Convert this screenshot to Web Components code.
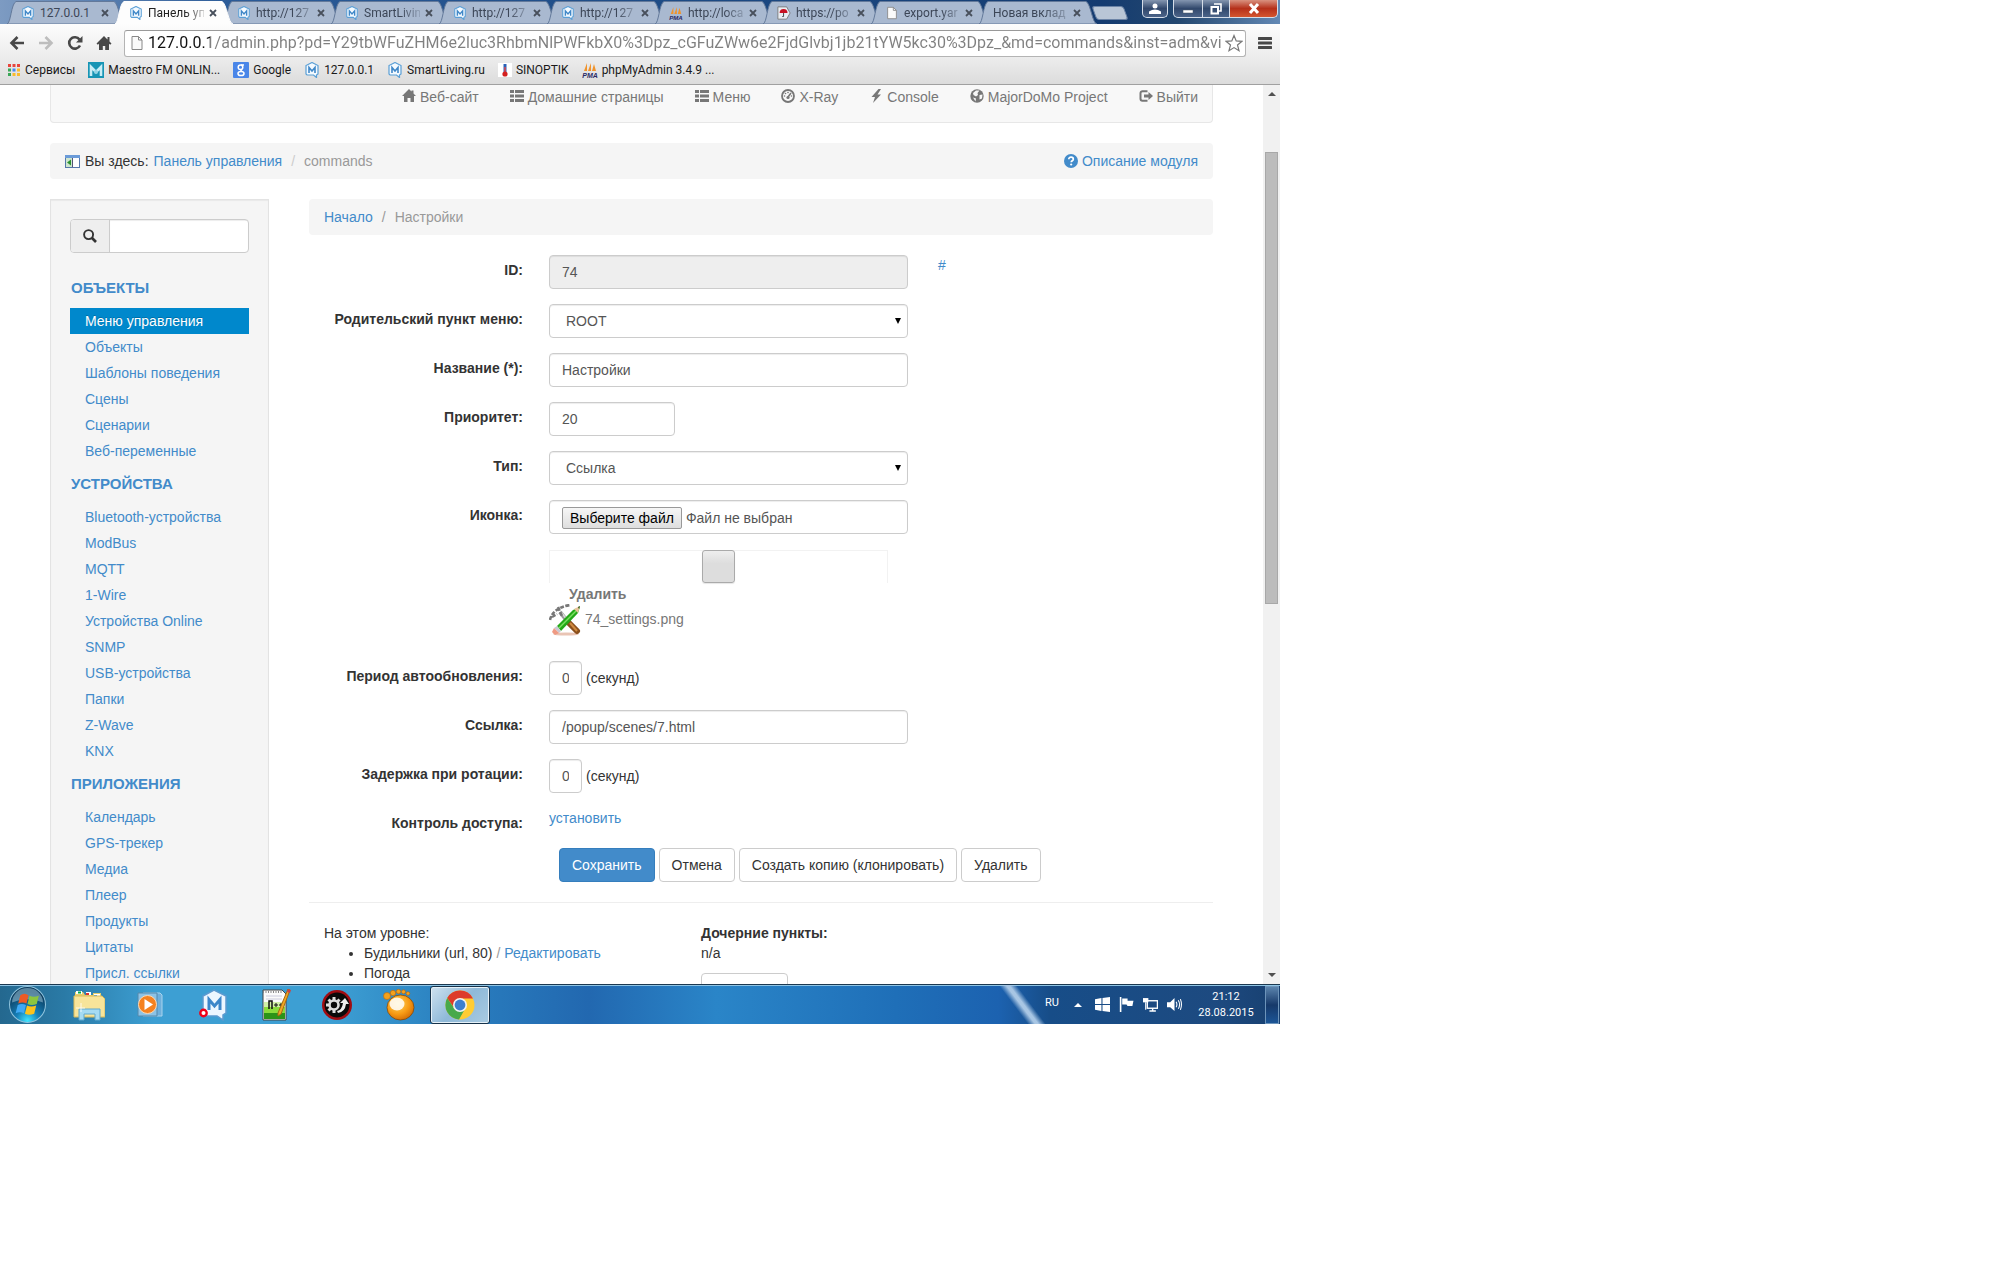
<!DOCTYPE html>
<html lang="ru">
<head>
<meta charset="utf-8">
<title>Панель управления</title>
<style>
body{margin:0;background:#fff;font:14px/20px "Liberation Sans",Arial,sans-serif;color:#333}
</style>
</head>
<body>
<desk-top></desk-top>
<script>
const M = '<path d="M8 .5l6 3v8.500l-1.500 1v2.500l-3-2.500H3L2 12V3.500z" fill="#f4faff" stroke="#5a9fd6" stroke-width="1.200"/><path d="M5 11V5.500l3 3.500 3-3.500V11" fill="none" stroke="#4088c8" stroke-width="1.600"/>';
const PMA = '<path d="M2 9L5 1v8zM6 9l3-8v8zM10 9l2-7 2 7z" fill="#f0932b"/><text x="8" y="16" font-size="7" font-weight="bold" font-style="italic" text-anchor="middle" font-family="Liberation Sans" fill="#2a2a66">PMA</text>';
const ICONS = {
  m: [16, M],
  pma: [16, PMA],
  umbrella: [16, '<path d="M1 1h10l4 7-4 7H1z" fill="#e9edf2" stroke="#777"/><path d="M3 8a4.500 4.500 0 0 1 9 0z" fill="#c81020"/><path d="M7.500 8v4h-1.500" fill="none" stroke="#333"/>'],
  file: [16, '<path d="M3 1.500h6.500l3.500 3.500v9.500H3z" fill="#fafafa" stroke="#888"/><path d="M9.500 1.500V5H13" fill="none" stroke="#888"/>'],
  close: [8, '<path d="M1 1l6 6M7 1L1 7" stroke="#48505c" stroke-width="1.800"/>'],
  back: [16, '<path d="M15 8H3M8.500 2L2.500 8l6 6" fill="none" stroke="#484848" stroke-width="2.600"/>'],
  fwd: [16, '<path d="M1 8h12M7.500 2l6 6-6 6" fill="none" stroke="#bdbdbd" stroke-width="2.600"/>'],
  reload: [16, '<path d="M13 10.500A5.700 5.700 0 1 1 12.500 4.500" fill="none" stroke="#484848" stroke-width="2.600"/><path d="M15.500 1v6.500H9z" fill="#484848"/>'],
  house: [16, '<path d="M8 1L.5 8.500l1.300 1.300L3 8.800V15h3.800v-4h2.400v4H13V8.800l1.200 1 1.300-1.300-2-2V2h-2v2.500z" fill="#484848"/>'],
  star: [18, '<path d="M9 1.500l2.200 5.400 5.800.4-4.500 3.700 1.500 5.700L9 13.600 4 16.700l1.500-5.700L1 7.300l5.800-.4z" fill="#fff" stroke="#777" stroke-width="1.200"/>'],
  burger: [14, '<path d="M1 2.500h12M1 7h12M1 11.500h12" stroke="#484848" stroke-width="3" stroke-linecap="round"/>'],
  apps: [14, '<g><path d="M1 1h3v3H1zM5.500 1h3v3h-3z" fill="#e8453c"/><path d="M10 1h3v3h-3z" fill="#e8453c"/><path d="M1 5.500h3v3H1z" fill="#3aa757"/><path d="M5.500 5.500h3v3h-3z" fill="#4688f1"/><path d="M10 5.500h3v3h-3zM10 10h3v3h-3zM5.500 10h3v3h-3z" fill="#f9bb2d"/><path d="M1 10h3v3H1z" fill="#3aa757"/></g>'],
  maestro: [16, '<rect width="16" height="16" fill="#1795b5"/><path d="M3 14V5l5 5 5-5v9" fill="none" stroke="#c9edf5" stroke-width="2.600"/><circle cx="8" cy="10" r="2" fill="#8fd3e4"/>'],
  google: [16, '<rect width="16" height="16" rx="1" fill="#4a86e8"/><circle cx="7.500" cy="5.200" r="2.300" fill="none" stroke="#fff" stroke-width="1.500"/><path d="M8 3h3M9 7.500L7.500 9" stroke="#fff" stroke-width="1.400"/><ellipse cx="8" cy="11.500" rx="3" ry="2.100" fill="none" stroke="#fff" stroke-width="1.500"/>'],
  thermo: [14, '<rect width="14" height="14" fill="#fff"/><path d="M5.500 1h3v8h-3z" fill="#2a62b8"/><path d="M7 4v6" stroke="#e44" stroke-width="1.400"/><circle cx="7" cy="11" r="2.600" fill="#d42020"/>'],
  home: [14, '<path d="M7 0L0 7h2v6h3.500V9h3v4H12V7h2l-2.500-2.500V1.500h-2v1z" fill="#777"/>'],
  list: [14, '<path d="M0 1h4v3H0zM5 1h9v3H5zM0 5.500h4v3H0zM5 5.500h9v3H5zM0 10h4v3H0zM5 10h9v3H5z" fill="#777"/>'],
  gauge: [14, '<circle cx="7" cy="7" r="6" fill="none" stroke="#777" stroke-width="1.800"/><path d="M7 8l3-4" stroke="#777" stroke-width="1.500"/><g fill="#777"><circle cx="7" cy="8.500" r="1.600"/><circle cx="3.500" cy="7" r=".8"/><circle cx="4.500" cy="4.500" r=".8"/><circle cx="7" cy="3.500" r=".8"/><circle cx="10.500" cy="7" r=".8"/></g>'],
  flash: [14, '<path d="M9.500 0L2.500 8H6l-2 6 8-8.500H8.500L12 0z" fill="#777"/>'],
  globe: [14, '<circle cx="7" cy="7" r="6.700" fill="#777"/><path d="M6 1.500L3 4l.5 2L6 7.500 8 6l-.5-2 2-2.500zM9.500 6l3-.5-.5 4-2.500 1zM3 8.500l3 1-.5 3z" fill="#f8f8f8"/>'],
  logout: [14, '<path d="M8.500 2.200H3.500a2 2 0 0 0-2 2v5.600a2 2 0 0 0 2 2h5" fill="none" stroke="#777" stroke-width="2"/><path d="M5 5.500h4.500V3L14 7l-4.500 4V8.500H5z" fill="#777"/>'],
  panel: [15, '<rect x=".5" y="1.500" width="14" height="12" fill="#fff" stroke="#5577aa"/><path d="M0 1h15v3H0z" fill="#6b9bd8"/><path d="M1 4h6v9H1z" fill="#cfe6cf"/><path d="M6 5.500L2 8.500l4 3z" fill="#2b9130"/><path d="M7.500 4v9" stroke="#557"/>'],
  help: [14, '<circle cx="7" cy="7" r="7" fill="#428bca"/><path d="M4.800 5.200C4.800 2.500 9.300 2.600 9.300 5.200 9.300 6.800 7.200 6.800 7.200 8.300" fill="none" stroke="#fff" stroke-width="1.700"/><circle cx="7.200" cy="10.500" r="1.100" fill="#fff"/>'],
  search: [14, '<circle cx="5.600" cy="5.600" r="4.500" fill="none" stroke="#333" stroke-width="1.900"/><path d="M9 9l4 4" stroke="#333" stroke-width="2.600"/>'],
  down: [6, '<path d="M0 0h6L3 6z" fill="#000"/>'],
  sup: [8, '<path d="M0 6h8L4 2z" fill="#505050"/>'],
  sdn: [8, '<path d="M0 2h8L4 6z" fill="#505050"/>'],
  tools: [32, '<ellipse cx="17" cy="30" rx="13" ry="1.600" fill="#e9c4b4"/><path d="M19 18L28 27" stroke="#8a4f1c" stroke-width="6" stroke-linecap="round"/><path d="M21 19l7 8" stroke="#d08a40" stroke-width="2"/><path d="M11 8l8 10" stroke="#999" stroke-width="4"/><path d="M12 8l7 9" stroke="#ddd" stroke-width="1.500"/><path d="M1 16C2 10 8 3 21 1M3 13l5-3M9 3l4 9" fill="none" stroke="#777" stroke-width="2.600" stroke-dasharray="4 1.500"/><path d="M31 3L24 6 8 22l4 5L29 9z" fill="#24a818"/><path d="M27 7L10 24" stroke="#7be060" stroke-width="1.500"/><path d="M31 2l-6 3 4 4z" fill="#e9c39b"/><path d="M31 2l-2 1 1 2z" fill="#205010"/><path d="M8 22l4 5-2 2-5-5z" fill="#c9c9d4"/><path d="M5 24l5 5-4 2-3-3z" fill="#ef9a83"/>'],
  orb: [36, '<defs><radialGradient id="g" cx=".5" cy=".95" r=".8"><stop offset="0" stop-color="#3fe6ff"/><stop offset=".4" stop-color="#1680b8"/><stop offset="1" stop-color="#0b3a5c"/></radialGradient></defs><circle cx="18" cy="18" r="17.500" fill="url(#g)" stroke="#8fc3dc"/><path d="M3 16a15 14 0 0 1 30 0q-15-6-30 0z" fill="#9cc4d8" opacity=".55"/><path d="M11 9q4-3 8 0l-2 8q-4-2-8 0z" fill="#ee5a24"/><path d="M20 9.500q4 2 9 0l-2 8q-5 2-9 0z" fill="#8cc63f"/><path d="M8.500 18.500q4-2 8 0l-2 8q-4-2-8 0z" fill="#3fa9f5"/><path d="M17.500 19q4 2 9 0l-2 8q-5 2-9 0z" fill="#fcc21b"/>'],
  folder: [32, '<path d="M2 3h8l2 3h8V4h8v6H2z" fill="#e8cf6e"/><path d="M3 2h6v3H3z" fill="#fff"/><path d="M5 2.500h3v2H5z" fill="#0a4"/><path d="M13 3h5v3h-5z" fill="#fff"/><path d="M13 4h3v2h-3z" fill="#d33"/><path d="M21 5h6v3h-6z" fill="#fff"/><path d="M21 6h3v2h-3z" fill="#39f"/><path d="M1 7h28l3 3v18H1z" fill="#f7e49a" stroke="#d9ba58"/><path d="M6 31V20h21v11h-5v-6H11v6z" fill="#a5dbf3" stroke="#5fa9cf"/><path d="M8 14v9M3 19h9" stroke="#fff" opacity=".8"/>'],
  media: [32, '<path d="M8 4h17l2 2v21H8z" fill="#6fb0dc" stroke="#a9d4ee"/><path d="M3 4h19v23H3z" fill="#8cc3e6" stroke="#58a"/><circle cx="12.500" cy="15.500" r="9" fill="#f58220" stroke="#ffd9b0"/><path d="M9.500 10l8.500 5.500-8.500 5.500z" fill="#fff"/>'],
  mbig: [32, '<path d="M17 1l12 6v17l-3 2v5l-6-4H10L6 24V7z" fill="#edf6ff" stroke="#5c9ad0" stroke-width="1.500"/><path d="M12 21V10.500l5.500 6.500 5.500-6.500V21" fill="none" stroke="#3d86c9" stroke-width="3"/><circle cx="6.500" cy="24" r="3.200" fill="#fff" stroke="#f00018" stroke-width="2.400"/>'],
  note: [32, '<path d="M4 1h19l4 4v26H4z" fill="#fbfbfb" stroke="#444"/><path d="M5 13h21v17H5z" fill="#d2f0a8"/><path d="M5 18h21v6H5z" fill="#8bdc3c"/><path d="M5 24h21v6H5z" fill="#2c9318"/><path d="M4 3h19" stroke="#888" stroke-width="2" stroke-dasharray="1 1.500"/><path d="M7 7h16M7 10h16" stroke="#ccd"/><path d="M10 20v-8h3v8" fill="none" stroke="#111" stroke-width="1.500"/><path d="M15 16h4M17 14v4M20 16h4M22 14v4" stroke="#111"/><path d="M31 1l-2-1-10 24v3l3-2z" fill="#f0a824" stroke="#a86810"/><path d="M29 0l3 1-1 3-3-1z" fill="#c44"/>'],
  gear: [32, '<circle cx="16" cy="16" r="15" fill="#a00c12"/><circle cx="16" cy="16" r="12.500" fill="#0a0a0a"/><circle cx="13" cy="16" r="4.500" fill="none" stroke="#ddd" stroke-width="2.600"/><path d="M13 8v3M13 21v3M5 16h3M7.500 10.500l2 2M7.500 21.500l2-2M18.500 10.500l-2 2" stroke="#ddd" stroke-width="3"/><path d="M16 22q5-1 6-8h-3l5-5 4 6h-3q-1 8-8 9z" fill="#eee"/>'],
  gom: [32, '<defs><radialGradient id="o" cx=".4" cy=".35" r=".7"><stop offset="0" stop-color="#ffd75e"/><stop offset=".6" stop-color="#f79a14"/><stop offset="1" stop-color="#d06a04"/></radialGradient></defs><g fill="#f5a11b" stroke="#b8650a" stroke-width=".6"><circle cx="4" cy="7" r="3.500"/><circle cx="10" cy="4" r="2.700"/><circle cx="15.500" cy="2.500" r="2.200"/><circle cx="20.500" cy="2.800" r="2"/><circle cx="25" cy="4.500" r="1.800"/></g><ellipse cx="17.500" cy="18.500" rx="13.500" ry="12.500" fill="url(#o)" stroke="#804000" stroke-width=".7"/><ellipse cx="14" cy="15" rx="7.500" ry="6.500" fill="#fff" opacity=".85"/>'],
  chrome: [32, '<circle cx="16" cy="16" r="14.500" fill="#fc3"/><path d="M16 1.500A14.500 14.500 0 0 1 29 9.500H16L9.500 18 3.200 9A14.500 14.500 0 0 1 16 1.500z" fill="#dd3b2b"/><path d="M3.200 9A14.500 14.500 0 0 0 15 30.500L21.500 19H10z" fill="#48a94a"/><circle cx="16" cy="16" r="7" fill="#f3f3f3"/><circle cx="16" cy="16" r="5.400" fill="#3d7fd0"/>'],
  tup: [8, '<path d="M0 6h8L4 2z" fill="#fff"/>'],
  win: [14, '<path d="M0 2l6-1v5.500H0zM7 1l7-1v6.500H7zM0 7.500h6V13l-6-1zM7 7.500h7V14l-7-1z" fill="#fff"/>'],
  flag: [14, '<path d="M1.500 0v14" stroke="#fff" stroke-width="1.500"/><path d="M3 1.500h5v2h5.500l-1 5H8l-1-1.500H3z" fill="#fff"/>'],
  net: [14, '<rect x="4" y="3.500" width="9.500" height="7" fill="#1d4a80" stroke="#fff" stroke-width="1.300"/><path d="M6 13h6M9 10.500V13" stroke="#fff" stroke-width="1.300"/><path d="M0 1h5v4H0z" fill="#fff"/><path d="M2.500 5v7" stroke="#fff"/>'],
  sound: [14, '<path d="M0 5h3l4-4v12L3 9.500H0z" fill="#fff"/><path d="M8.500 4.500q1.500 2.500 0 5M10.500 3q2.500 4 0 8M12.500 2q2 5 0 10" fill="none" stroke="#fff"/>'],
  user: [12, '<circle cx="6" cy="3" r="2.500" fill="#fff"/><path d="M0 11V8.500Q6 4.500 12 8.500V11z" fill="#fff"/>'],
  min: [12, '<path d="M1 7h10v3H1z" fill="#fff" stroke="#456" stroke-width=".5"/>'],
  max: [12, '<path d="M4 1h7v7H9" fill="none" stroke="#fff" stroke-width="1.600"/><path d="M1.500 4h6.500v6.500H1.500z" fill="none" stroke="#fff" stroke-width="2"/>'],
  shut: [12, '<path d="M2 1l8 9M10 1l-8 9" stroke="#fff" stroke-width="3"/>']
};
const icon = (n, s) => `<svg class="i" aria-hidden="true" width="${s || ICONS[n][0]}" height="${s || ICONS[n][0]}" viewBox="0 0 ${ICONS[n][0]} ${ICONS[n][0]}">${ICONS[n][1]}</svg>`;
const BASE = `*{box-sizing:border-box}:host{display:block}.i{flex:none;display:block}a{color:#428bca;text-decoration:none}button{font:inherit;margin:0;cursor:pointer}`;
const define = (name, css, html) => customElements.define(name, class extends HTMLElement {
  connectedCallback() {
    if (this.shadowRoot) return;
    this.attachShadow({ mode: 'open' }).innerHTML = `<style>${BASE}${css}</style>${typeof html === 'function' ? html(this) : html}`;
  }
});
const at = (el, n, d = '') => el.getAttribute(n) ?? d;

/* window frame */
define('desk-top', `:host{display:flex;flex-direction:column;max-width:1280px;height:1024px;max-height:100vh;overflow:hidden}
page-view{flex:1;min-height:0}`,
`<title-bar></title-bar><address-bar></address-bar><bookmark-bar></bookmark-bar><page-view></page-view><task-bar></task-bar>`);

define('browser-tab', `:host{flex:0 1 118px;margin-right:-10px;min-width:0;position:relative;height:23px}
:host([active]){z-index:2}
.shape{position:absolute;inset:0;width:100%;height:100%}
button{position:relative;width:100%;height:100%;border:0;background:none;padding:0 16px 0 14px;display:flex;align-items:center;gap:5px;font:12px/20px Roboto,sans-serif;color:#3c4657;text-align:left}
:host([active]) button{color:#222}
span{flex:1;min-width:0;overflow:hidden;white-space:nowrap;-webkit-mask-image:linear-gradient(90deg,#000 65%,transparent 110%);mask-image:linear-gradient(90deg,#000 65%,transparent 110%)}
:host([full]) span{-webkit-mask-image:none;mask-image:none}`,
e => `<svg class="shape" viewBox="0 0 118 23" preserveAspectRatio="none"><path d="M0 23C4 22 4 3 9 .5H107C112 3 113 22 118 23z" fill="${e.hasAttribute('active') ? '#fdfdfd' : '#a9b9d0'}" stroke="${e.hasAttribute('active') ? '#fdfdfd' : '#63799a'}"/></svg>
<button type="button">${at(e, 'icon') ? icon(at(e, 'icon'), 14) : ''}<span>${at(e, 'label')}</span>${icon('close')}</button>`);

define('title-bar', `:host{display:flex;align-items:flex-start;height:24px;padding:1px 2px 0 7px;background:linear-gradient(90deg,#7d9bc2 0,#2b5b98 18%,#1c4a84 55%,#143b70 86%,#23476f 92%,#6288b4 100%)}
nav{display:flex;flex:0 1 1090px;min-width:0}
.new{width:32px;height:14px;margin:5px 0 0 -3px;border:1px solid #6c84a6;background:#b9c6d6;transform:skewX(20deg);border-radius:3px;padding:0}
.ctl{margin:-1px 0 0 auto;display:flex;gap:5px}
.ctl button{height:18px;border:1px solid #d5dde8;border-top:0;border-left-width:0;padding:0;display:grid;place-items:center;background:linear-gradient(#8496b0,#31486c 50%,#4a6388)}
.u button{width:26px;border-left-width:1px;border-radius:0 0 5px 5px}
.w{display:flex}.w button{width:27px}.w button:first-child{width:30px;border-left-width:1px;border-radius:0 0 0 5px}
.w button:last-child{width:48px;border-radius:0 0 5px 0;background:linear-gradient(#d9917f,#b5301a 50%,#d4552f)}`,
`<nav><browser-tab icon="m" label="127.0.0.1" full></browser-tab><browser-tab icon="m" label="Панель уп" active></browser-tab><browser-tab icon="m" label="http://127"></browser-tab><browser-tab icon="m" label="SmartLivin"></browser-tab><browser-tab icon="m" label="http://127"></browser-tab><browser-tab icon="m" label="http://127"></browser-tab><browser-tab icon="pma" label="http://loca"></browser-tab><browser-tab icon="umbrella" label="https://po"></browser-tab><browser-tab icon="file" label="export.yar"></browser-tab><browser-tab label="Новая вклад"></browser-tab></nav>
<button class="new" type="button"></button>
<div class="ctl"><div class="u"><button type="button">${icon('user')}</button></div><div class="w"><button type="button">${icon('min')}</button><button type="button">${icon('max')}</button><button type="button">${icon('shut')}</button></div></div>`);

define('address-bar', `:host{display:flex;align-items:center;gap:12px;height:36px;padding:2px 8px 0 9px;background:linear-gradient(#fdfdfd,#ebebeb)}
.nav{display:flex;gap:13px}
.nav button,.menu{border:0;background:none;padding:0}
.box{flex:1;min-width:0;display:flex;align-items:center;gap:3px;height:27px;border:1px solid #b4b4b4;border-top-color:#999;border-radius:3px;background:#fff;padding:0 2px 0 4px}
input{flex:1;min-width:0;border:0;outline:0;padding:0;height:24px;font:16px/24px Roboto,sans-serif;color:#808080;background:linear-gradient(90deg,#111 62px,#808080 62px);-webkit-background-clip:text;background-clip:text;-webkit-text-fill-color:transparent}`,
`<div class="nav"><button type="button">${icon('back')}</button><button type="button">${icon('fwd')}</button><button type="button">${icon('reload')}</button><button type="button">${icon('house')}</button></div>
<div class="box">${icon('file')}<input type="text" value="127.0.0.1/admin.php?pd=Y29tbWFuZHM6e2luc3RhbmNlPWFkbX0%3Dpz_cGFuZWw6e2FjdGlvbj1jb21tYW5kc30%3Dpz_&amp;md=commands&amp;inst=adm&amp;vi">${icon('star')}</div><button class="menu" type="button">${icon('burger')}</button>`);

define('bookmark-bar', `:host{display:flex;align-items:center;gap:13px;height:25px;padding:0 7px 5px;background:linear-gradient(#ebebeb,#dcdcdc);border-bottom:1px solid #a0a0a0;font:12px/18px Roboto,sans-serif}
a{display:flex;align-items:center;gap:4px;color:#1a1a1a;white-space:nowrap}a:first-child{gap:7px;margin-right:-2px}`,
[['apps', 'Сервисы'], ['maestro', 'Maestro FM ONLIN...'], ['google', 'Google'], ['m', '127.0.0.1'], ['m', 'SmartLiving.ru'], ['thermo', 'SINOPTIK'], ['pma', 'phpMyAdmin 3.4.9 ...']].map(b => `<a href="#">${icon(b[0])}${b[1]}</a>`).join(''));

/* page */
define('page-view', `:host{display:flex;overflow:hidden;background:#fff}
.page{flex:1;min-width:0;padding:0 50px;overflow:hidden}
.cols{display:flex;gap:40px;align-items:flex-start;margin-top:20px}
side-menu{flex:0 0 219px;width:219px;min-width:0}main{flex:1;min-width:0}
.bar{flex:none;width:17px;background:#f1f1f1;display:flex;flex-direction:column;align-items:center;padding:5px 0}
.thumb{width:13px;height:452px;margin-top:54px;margin-bottom:auto;background:#bcbcbc;border:1px solid #a8a8a8}
crumb-bar{margin-top:20px}main crumb-bar{margin:0 0 20px}`,
`<div class="page"><admin-nav></admin-nav>
<crumb-bar><span slot="lead">Вы здесь:</span><a href="#">Панель управления</a><i>/</i><b>commands</b><a slot="end" href="#">Описание модуля</a></crumb-bar>
<div class="cols"><side-menu>
<side-group heading="ОБЪЕКТЫ" items="*Меню управления|Объекты|Шаблоны поведения|Сцены|Сценарии|Веб-переменные"></side-group>
<side-group heading="УСТРОЙСТВА" items="Bluetooth-устройства|ModBus|MQTT|1-Wire|Устройства Online|SNMP|USB-устройства|Папки|Z-Wave|KNX"></side-group>
<side-group heading="ПРИЛОЖЕНИЯ" items="Календарь|GPS-трекер|Медиа|Плеер|Продукты|Цитаты|Присл. ссылки"></side-group>
</side-menu><main><crumb-bar plain><a href="#">Начало</a><i>/</i><b>Настройки</b></crumb-bar><command-form></command-form><level-lists></level-lists></main></div></div>
<div class="bar">${icon('sup')}<div class="thumb"></div>${icon('sdn')}</div>`);

define('admin-nav', `:host{display:block;border:1px solid #e7e7e7;border-top:0;border-radius:0 0 4px 4px;background:#f8f8f8;padding:2px 14px 15px}
nav{display:flex;justify-content:flex-end;gap:31px}
a{display:flex;align-items:center;gap:4px;color:#777;white-space:nowrap}.i{margin-top:-2px}`,
`<nav>${[['home', 'Веб-сайт'], ['list', 'Домашние страницы'], ['list', 'Меню'], ['gauge', 'X-Ray'], ['flash', 'Console'], ['globe', 'MajorDoMo Project'], ['logout', 'Выйти']].map(b => `<a href="#">${icon(b[0])}${b[1]}</a>`).join('')}</nav>`);

define('crumb-bar', `:host{display:flex;align-items:center;gap:5px;height:36px;padding:0 15px;border-radius:4px;background:#f5f5f5}
nav{display:flex;flex:1}
.end{display:flex;align-items:center;gap:4px}
::slotted(a){color:#428bca;text-decoration:none}
::slotted(i){font-style:normal;color:#ccc;padding:0 9px}
:host([plain]) ::slotted(i){color:#999}
::slotted(b){font-weight:normal;color:#999}`,
e => e.hasAttribute('plain') ? '<nav><slot></slot></nav>' : `${icon('panel')}<slot name="lead"></slot><nav><slot></slot></nav><div class="end">${icon('help')}<slot name="end"></slot></div>`);

define('side-menu', `:host{display:block;border:1px solid #e3e3e3;background:#f5f5f5;padding:19px;box-shadow:inset 0 1px 1px rgba(0,0,0,.05);box-sizing:border-box}
.s{display:flex;height:34px;border:1px solid #ccc;border-radius:4px;background:#fff;overflow:hidden;margin-bottom:15px}
label{flex:none;width:39px;display:grid;place-items:center;background:#eee;border-right:1px solid #ccc}
input{flex:1;min-width:0;width:0;border:0;outline:0;background:none;padding:0 12px;font:inherit;box-shadow:inset 0 1px 1px rgba(0,0,0,.075)}`,
`<div class="s"><label for="q">${icon('search')}</label><input id="q" type="text"></div><slot></slot>`);

define('side-group', `h3{margin:0;height:40px;font-size:15px;line-height:40px;font-weight:bold;color:#428bca;padding-left:1px}
a{display:block;padding:3px 15px;line-height:20px;white-space:nowrap}
a.on{background:#08c;color:#fff;text-shadow:0 -1px 0 rgba(0,0,0,.2)}`,
e => `<h3>${at(e, 'heading')}</h3>${at(e, 'items').split('|').map(t => t[0] === '*' ? `<a class="on" href="#">${t.slice(1)}</a>` : `<a href="#">${t}</a>`).join('')}`);

const ROW = `.row{display:flex;align-items:flex-start;margin-bottom:15px}
.l{flex:0 0 214px;margin-right:26px;padding-top:5px;text-align:right;font-weight:bold;white-space:nowrap}
.c{flex:0 1 359px;min-width:0;display:flex;align-items:center;gap:4px}
.f{height:34px;width:100%;border:1px solid #ccc;border-radius:4px;background:#fff;padding:0 12px;color:#555;font:inherit;box-shadow:inset 0 1px 1px rgba(0,0,0,.075);outline:0}`;

define('form-field', `${ROW}
.f[readonly]{background:#eee}.f.mid{width:126px}.f.tiny{width:33px}
.sel{position:relative;width:100%}.sel .i{position:absolute;right:7px;top:14px;pointer-events:none}
select.f{appearance:none;-webkit-appearance:none;padding:0 16px;display:block}
.x{margin-left:30px}
label.f{display:flex;align-items:center;gap:4px;padding-top:2px}
.file{position:absolute;opacity:0;width:1px;height:1px}
.pick{height:22px;line-height:20px;border:1px solid #999;border-radius:2px;background:linear-gradient(#f6f6f6,#dedede);color:#000;padding:0 7px}`,
e => {
  const k = at(e, 'kind', 'text'), v = at(e, 'value');
  const c = k === 'select' ? `<div class="sel"><select id="f" class="f"><option>${v}</option></select>${icon('down')}</div>`
    : k === 'file' ? `<input class="file" type="file" id="f"><label class="f" for="f"><span class="pick">Выберите файл</span><span>${v}</span></label>`
    : k === 'link' ? `<a href="#">${v}</a>`
    : `<input id="f" class="f ${at(e, 'size')}" type="text" value="${v}"${e.hasAttribute('readonly') ? ' readonly' : ''}>`;
  const lab = k === 'link' ? `<span class="l">${at(e, 'label')}</span>` : `<label class="l" for="f">${at(e, 'label')}</label>`;
  return `<div class="row">${lab}<div class="c">${c}${at(e, 'unit') ? `<span>${at(e, 'unit')}</span>` : ''}</div>${e.hasAttribute('hash') ? '<a class="x" href="#">#</a>' : ''}</div>`;
});

define('icon-preview', `:host{display:block;margin:0 0 25px 240px;padding-top:1px;color:#777}
.sw{display:flex;justify-content:center;width:339px;height:33px;border:1px solid #f2f2f2;border-bottom:0}
input{appearance:none;-webkit-appearance:none;margin:-1px 0 0;width:33px;height:33px;border:1px solid #aaa;border-radius:3px;background:linear-gradient(#eee,#ddd 40%);box-shadow:0 1px 1px rgba(0,0,0,.1)}
label{display:block;font-weight:bold;padding:1px 20px 0;height:21px}
.n{display:flex;gap:4px}.n span{padding-top:5px}`,
`<div class="sw"><input type="checkbox" id="d"></div><label for="d">Удалить</label><div class="n">${icon('tools')}<span>74_settings.png</span></div>`);

define('command-form', `.btns{display:flex;gap:4px;margin-left:250px}
.btns button{height:34px;border:1px solid #ccc;border-radius:4px;background:#fff;color:#333;padding:0 12px;white-space:nowrap}
.btns .p{background:#428bca;border-color:#357ebd;color:#fff}
hr{border:0;border-top:1px solid #eee;margin:20px 0}`,
`<form onsubmit="return false"><form-field label="ID:" value="74" readonly hash></form-field>
<form-field label="Родительский пункт меню:" kind="select" value="ROOT"></form-field>
<form-field label="Название (*):" value="Настройки"></form-field>
<form-field label="Приоритет:" value="20" size="mid"></form-field>
<form-field label="Тип:" kind="select" value="Ссылка"></form-field>
<form-field label="Иконка:" kind="file" value="Файл не выбран"></form-field>
<icon-preview></icon-preview>
<form-field label="Период автообновления:" value="0" size="tiny" unit="(секунд)"></form-field>
<form-field label="Ссылка:" value="/popup/scenes/7.html"></form-field>
<form-field label="Задержка при ротации:" value="0" size="tiny" unit="(секунд)"></form-field>
<form-field label="Контроль доступа:" kind="link" value="установить"></form-field>
<div class="btns"><button class="p">Сохранить</button><button>Отмена</button><button>Создать копию (клонировать)</button><button>Удалить</button></div></form><hr>`);

define('level-lists', `:host{display:flex;padding-left:15px}
div{flex:0 1 377px}ul{margin:0;padding-left:40px}li i{font-style:normal;color:#999}
button{display:block;width:87px;height:34px;margin-top:10px;border:1px solid #ccc;border-radius:4px;background:#fff}`,
`<div>На этом уровне:<ul><li>Будильники (url, 80) <i>/</i> <a href="#">Редактировать</a></li><li>Погода</li></ul></div><div><b>Дочерние пункты:</b><br>n/a<button type="button"></button></div>`);

/* task bar */
define('task-bar', `:host{box-sizing:border-box;display:flex;align-items:center;height:40px;padding:0 1px 0 8px;border-top:1px solid #1b3850;box-shadow:inset 0 1px 0 #8fc4e4;color:#fff;font:11px/16px Roboto,sans-serif;
background:linear-gradient(90deg,#24688f 0,#2a7aa6 5%,#3d9fd3 12%,#3d9fd3 26%,#2a80c0 35%,#2268b0 46%,#2a85c8 56%,#1f6fb8 70%,#1c62b0 78%,#174d88 82%,#1d4a80 95%,#184070 100%)}
button{border:0;background:none;padding:0;display:grid;place-items:center;width:61px;height:38px;margin-right:1px}
.o{width:38px;margin-right:12px}
.a{border:1px solid #16324a;border-radius:3px;background:linear-gradient(135deg,#cfe2f0,#8fb9d8 50%,#a9cbe2);box-shadow:inset 0 0 0 1px #e6f1f8;width:60px}
.ray{align-self:stretch;width:52px;margin-left:auto;background:linear-gradient(53deg,transparent 38%,#a8c6e4 47%,#a8c6e4 51%,transparent 60%)}
.tray{display:flex;align-items:center;gap:9px}.tray>:first-child{margin:-4px 6px 0 -4px}.tray>:nth-child(2){margin-right:4px}
time{width:64px;text-align:center;margin-left:12px}
.d{width:14px;margin:0 0 0 7px;height:38px;border:1px solid #6d94ba;background:linear-gradient(#5b84ad,#16396a 50%,#1c5596)}`,
`<button class="o" type="button">${icon('orb', 37)}</button>${['folder', 'media', 'mbig', 'note', 'gear', 'gom'].map(n => `<button type="button">${icon(n)}</button>`).join('')}<button class="a" type="button">${icon('chrome')}</button>
<div class="ray"></div><div class="tray"><span>RU</span>${icon('tup')}${icon('win', 15)}${icon('flag', 15)}${icon('net', 15)}${icon('sound', 15)}</div><time>21:12<br>28.08.2015</time><button class="d" type="button"></button>`);
</script>
</body>
</html>
